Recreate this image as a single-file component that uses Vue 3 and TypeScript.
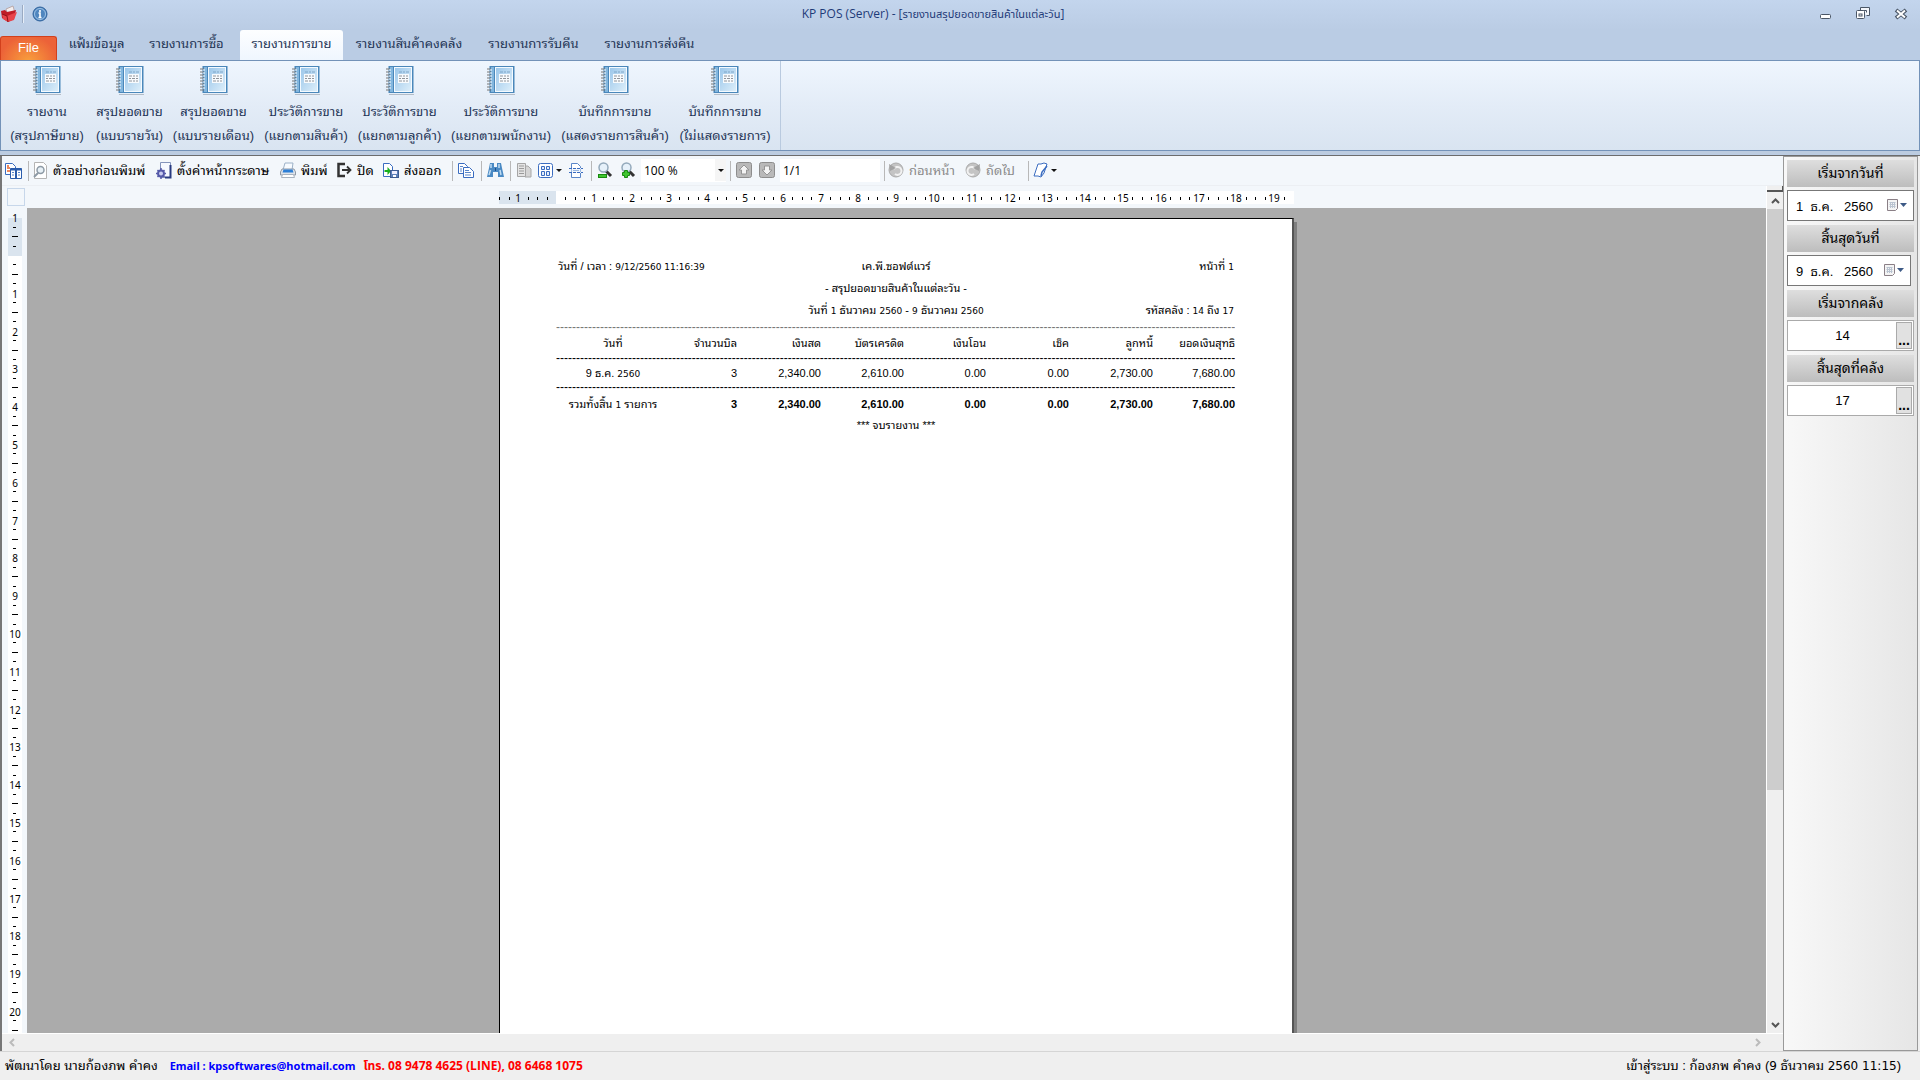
<script setup lang="ts">
import { ref } from 'vue'

interface RibbonItem { title: string; detail: string }
interface Tick { pos: number; label?: string; half?: boolean }

const CM = 37.8

const tabs = ['แฟ้มข้อมูล', 'รายงานการซื้อ', 'รายงานการขาย', 'รายงานสินค้าคงคลัง', 'รายงานการรับคืน', 'รายงานการส่งคืน']
const activeTab = ref(2)

const ribbon: RibbonItem[] = [
  { title: 'รายงาน', detail: '(สรุปภาษีขาย)' },
  { title: 'สรุปยอดขาย', detail: '(แบบรายวัน)' },
  { title: 'สรุปยอดขาย', detail: '(แบบรายเดือน)' },
  { title: 'ประวัติการขาย', detail: '(แยกตามสินค้า)' },
  { title: 'ประวัติการขาย', detail: '(แยกตามลูกค้า)' },
  { title: 'ประวัติการขาย', detail: '(แยกตามพนักงาน)' },
  { title: 'บันทึกการขาย', detail: '(แสดงรายการสินค้า)' },
  { title: 'บันทึกการขาย', detail: '(ไม่แสดงรายการ)' },
]

const columns = ['วันที่', 'จำนวนบิล', 'เงินสด', 'บัตรเครดิต', 'เงินโอน', 'เช็ค', 'ลูกหนี้', 'ยอดเงินสุทธิ']
const amounts = ['3', '2,340.00', '2,610.00', '0.00', '0.00', '2,730.00', '7,680.00']
const dashes = '-'.repeat(170)

function ticks(zero: number, from: number, to: number): Tick[] {
  const out: Tick[] = []
  for (let q = from; q <= to; q++) {
    if (q === 0) continue
    const pos = Math.round(zero + (q * CM) / 4)
    if (q % 4 === 0) out.push({ pos, label: String(Math.abs(q / 4)) })
    else out.push({ pos, half: q % 2 === 0 })
  }
  return out
}
const across = ticks(57, -6, 77)
const down = ticks(46, -4, 82)

const zoom = ref('100 %')
const page = ref('1/1')
const dateFrom = ref('1\u00a0\u00a0ธ.ค.\u00a0\u00a0\u00a02560')
const dateTo = ref('9\u00a0\u00a0ธ.ค.\u00a0\u00a0\u00a02560')
const storeFrom = ref('14')
const storeTo = ref('17')
</script>

<template>
  <div class="window">
    <header class="titlebar">
      <div class="quick">
        <svg width="18" height="18" viewBox="0 0 18 18"><path d="M6 4l7-3 2 7-7 3z" fill="#f4eeee" stroke="#b9a9a9" /><path d="M1 6l4-1 2 2 9-2-2 9-6 3-6-4z" fill="#c01d27" /><path d="M2 9l5 2 10-4-3 8-6 2-5-3z" fill="#e8444a" /><path d="M2 9l5 2 1 6" stroke="#8d1118" fill="none" /></svg>
        <span class="quick-sep"></span>
        <button class="bare" type="button" aria-label="Info">
          <svg width="16" height="16" viewBox="0 0 16 16"><circle cx="8" cy="8" r="7" fill="#4f86bf" stroke="#2f629c" /><circle cx="8" cy="8" r="5.500" fill="none" stroke="#9fc3e6" /><path d="M8 4v2M6.500 7h1.500v4M6.500 11.500h3" stroke="#fff" stroke-width="1.600" fill="none" /></svg>
        </button>
      </div>
      <h1>KP POS (Server) - [<span>รายงานสรุปยอดขายสินค้าในแต่ละวัน</span>]</h1>
      <div class="winbtns">
        <button class="bare" type="button" aria-label="Minimize"><svg width="14" height="14" viewBox="0 0 14 14"><rect x="2.500" y="7.500" width="10" height="4" rx="1" fill="#fff" stroke="#4a5666" /></svg></button>
        <button class="bare" type="button" aria-label="Restore"><svg width="14" height="14" viewBox="0 0 14 14"><path d="M4.500 3V.500h9v8h-3" fill="#f3f6fb" stroke="#4a5666" /><path d="M7 3.500h3.500v2" fill="none" stroke="#4a5666" /><rect x=".5" y="3.500" width="8" height="8" rx="1" fill="#fff" stroke="#4a5666" /><rect x="3" y="7" width="3" height="2" fill="none" stroke="#4a5666" /></svg></button>
        <button class="bare" type="button" aria-label="Close"><svg width="14" height="14" viewBox="0 0 14 14"><path d="M2 3l10 8M12 3L2 11" stroke="#4a5666" stroke-width="4" /><path d="M3 3.500l8 7M11 3.500l-8 7" stroke="#fff" stroke-width="2" /></svg></button>
      </div>
    </header>

    <nav class="tabs">
      <button class="file" type="button">File</button>
      <button v-for="(t, i) in tabs" :key="t" type="button" class="tab" :class="{ active: i === activeTab }" @click="activeTab = i">{{ t }}</button>
    </nav>

    <section class="ribbon">
      <div class="ribbon-group">
        <button v-for="item in ribbon" :key="item.detail" class="big" type="button">
          <svg width="30" height="30" viewBox="0 0 30 30">
            <path d="M4 29.500h25" stroke="#b4bdc8" />
            <rect x="3.500" y="1" width="25" height="27" fill="#4a87ba" />
            <rect x="5" y="2" width="3" height="25" fill="#82b6de" />
            <rect x="9" y="2" width="18" height="25" fill="#f4faff" />
            <rect x="10" y="3" width="16" height="23" fill="url(#cover)" />
            <rect x="13" y="9" width="11" height="9" fill="#f7fafd" />
            <path d="M14 7h3M18 7h2M21 7h3" stroke="#7ea6c8" />
            <path d="M14 11h3M18 11h2M21 11h2M14 13.500h2M17 13.500h3M21 13.500h2M14 16h3M18 16h2M21 16h2" stroke="#8f949a" />
            <path d="M1 4h4M1 7h4M1 10h4M1 13h4M1 16h4M1 19h4M1 22h4M1 25h4" stroke="#777" stroke-width="1" />
            <path d="M4 5h2M4 8h2M4 11h2M4 14h2M4 17h2M4 20h2M4 23h2" stroke="#fff" stroke-width="1" />
            <defs><linearGradient id="cover" x1="0" y1="0" x2="1" y2="1"><stop offset="0" stop-color="#9cc7ea" /><stop offset="1" stop-color="#dceefa" /></linearGradient></defs>
          </svg>
          <span>{{ item.title }}</span>
          <span>{{ item.detail }}</span>
        </button>
      </div>
    </section>

    <div class="body">
      <main class="viewer">
        <div class="toolbar" role="toolbar">
          <button type="button" aria-label="Contents"><svg width="17" height="17" viewBox="0 0 17 17"><path d="M.5 1.500h7l3 3v8H.5z" fill="#fff" stroke="#3a6cc0" /><path d="M2 4h2M2 6h3M2 9h3" stroke="#e8622a" stroke-width="1.500" /><path d="M5.500 6.500h11v10h-11z" fill="#fff" stroke="#2b5cab" /><path d="M5.500 7.500h11M11 7v9" stroke="#2b5cab" stroke-width="2" /><path d="M7 10.500h2M7 13h2M13 10.500h2M13 13h2" stroke="#5a86c8" /></svg></button>
          <i class="sep"></i>
          <button type="button"><svg width="15" height="17" viewBox="0 0 15 17"><path d="M1.500.500h9l3 3v13h-12z" fill="#fff" stroke="#b4b4b4" /><circle cx="7.500" cy="8" r="3.500" fill="#e7f0f6" stroke="#8d9aa5" stroke-width="1.500" /><path d="M5 11l-4 4" stroke="#8d9aa5" stroke-width="2" /></svg><span>ตัวอย่างก่อนพิมพ์</span></button>
          <button type="button"><svg width="16" height="17" viewBox="0 0 16 17"><path d="M4.500.500h10v15h-10z" fill="#f6f9ff" stroke="#8494bb" /><path d="M14.500 3v12.500H9" stroke="#283a80" stroke-width="2" fill="none" /><circle cx="5" cy="11.500" r="3" fill="#c9cdf0" stroke="#5459a8" stroke-width="2" /><path d="M5 6v2M5 15v2M0 11.500h1M9 11.500h1M1.500 8l1.500 1.500M8.500 8L7 9.500M1.500 15L3 13.500M8.500 15L7 13.500" stroke="#5459a8" stroke-width="1.500" /></svg><span>ตั้งค่าหน้ากระดาษ</span></button>
          <button type="button"><svg width="16" height="17" viewBox="0 0 16 17"><path d="M5 1h8l-1 7H3z" fill="#f7fbff" stroke="#9db2c8" /><path d="M2 7h12l1.500 3v3H.5v-3z" fill="#dfe4ea" stroke="#8f99a6" /><path d="M3.500 7.500h9l1 3h-11z" fill="#2c7fd6" /><path d="M2.500 12.500h11l1 3H1.500z" fill="#fff" stroke="#a9b3bf" /></svg><span>พิมพ์</span></button>
          <button type="button"><svg width="16" height="17" viewBox="0 0 16 17"><path d="M9 2H2.500v12H9" fill="none" stroke="#333" stroke-width="2.500" /><path d="M6 8h8M11 4.500L14.500 8 11 11.500" fill="none" stroke="#333" stroke-width="1.800" /></svg><span>ปิด</span></button>
          <button type="button"><svg width="16" height="17" viewBox="0 0 16 17"><path d="M.5 1.500h6l3 3v10h-9z" fill="#fff" stroke="#3a6cc0" /><path d="M1.500 8h3V5L8 9l-3.500 4v-3h-3z" fill="#18b01c" /><rect x="7.500" y="8.500" width="8" height="7" fill="#5c80b8" stroke="#3c5b90" /><rect x="9" y="9" width="5" height="3" fill="#eef" /><rect x="10" y="13" width="3" height="2" fill="#fff" /></svg><span>ส่งออก</span></button>
          <i class="sep"></i>
          <button type="button" aria-label="Copy"><svg width="16" height="17" viewBox="0 0 16 17"><path d="M.5 1.500h6l3 3v7h-9z" fill="#fff" stroke="#3a6cc0" /><path d="M5.500 5.500h6l4 4v6h-10z" fill="#fff" stroke="#3a6cc0" /><path d="M2 4.500h3M2 7h2M2 9h2M7 8.500h4M7 10.500h6M7 13h6" stroke="#5a86c8" /></svg></button>
          <i class="sep"></i>
          <button type="button" aria-label="Find"><svg width="17" height="17" viewBox="0 0 17 17"><path d="M3 1h4v4h3V1h4l1 5 2 9h-6v-5H6v5H0L2 6z" fill="#4a8ac4" /><path d="M4 2v4M3.500 8L2 13M12 2v4M13 8l1 5" stroke="#c0dcf2" stroke-width="1.500" /><path d="M8.500 6v3" stroke="#1e4c86" /></svg></button>
          <i class="sep"></i>
          <button type="button" aria-label="Outline" disabled><svg width="16" height="17" viewBox="0 0 16 17"><path d="M9 4h3l3 3v8H9z" fill="#d5d5d5" stroke="#a8a8a8" /><path d="M1.500 1.500h8v13h-8z" fill="#e4e4e4" stroke="#a5a5a5" /><path d="M3 4h5M3 6.500h5M3 9h5M3 11.500h5" stroke="#9a9a9a" /></svg></button>
          <button type="button" aria-label="Multiple pages"><svg width="26" height="17" viewBox="0 0 26 17"><rect x=".5" y="1.500" width="14" height="14" rx="2" fill="#fff" stroke="#3a6cc0" /><path d="M3.500 4.500h3v3h-3zM8.500 4.500h3v3h-3zM3.500 9.500h3v4h-3zM8.500 9.500h3v4h-3z" fill="#e4eefb" stroke="#3a6cc0" /><path d="M18 7h6l-3 3z" fill="#111" /></svg></button>
          <button type="button" aria-label="Continuous view"><svg width="16" height="17" viewBox="0 0 16 17"><path d="M3.500 6V1.500h6l3 3V6M3.500 11v4.500h9V11" fill="#fff" stroke="#5a86c8" /><path d="M1 6.500h14M1 10.500h14" stroke="#3a6cc0" stroke-dasharray="3 1" /><path d="M3.500 7v3M12.500 7v3M5 8.500h6" stroke="#9ab8e2" /></svg></button>
          <i class="sep"></i>
          <button type="button" aria-label="Zoom out"><svg width="17" height="17" viewBox="0 0 17 17"><path d="M9 9l5 5" stroke="#333" stroke-width="3" /><circle cx="6.500" cy="5.500" r="4.500" fill="#e6f1fa" stroke="#93a9bb" stroke-width="1.500" /><rect x="1.500" y="12.500" width="8" height="3" fill="#3fc62f" stroke="#188a10" /></svg></button>
          <button type="button" aria-label="Zoom in"><svg width="17" height="17" viewBox="0 0 17 17"><path d="M9 9l5 5" stroke="#333" stroke-width="3" /><circle cx="6.500" cy="5.500" r="4.500" fill="#e6f1fa" stroke="#93a9bb" stroke-width="1.500" /><path d="M4.500 8.500h3v2h2v3h-2v2h-3v-2h-2v-3h2z" fill="#3fc62f" stroke="#188a10" /></svg></button>
          <div class="zoombox">
            <select v-model="zoom" aria-label="Zoom"><option>100 %</option></select>
            <svg width="11" height="22" viewBox="0 0 11 22"><path d="M3 10h6l-3 3z" fill="#111" /></svg>
          </div>
          <i class="sep"></i>
          <button type="button" aria-label="Previous page" disabled><svg width="17" height="17" viewBox="0 0 17 17"><rect x=".5" y=".5" width="15" height="15" rx="2" fill="#b9b9b9" stroke="#8d8d8d" /><path d="M8 3l5 5h-2.500v4h-5V8H3z" fill="#f4f4f4" stroke="#959595" /></svg></button>
          <button type="button" aria-label="Next page" disabled><svg width="17" height="17" viewBox="0 0 17 17"><rect x=".5" y=".5" width="15" height="15" rx="2" fill="#b9b9b9" stroke="#8d8d8d" /><path d="M8 13L3 8h2.500V4h5v4H13z" fill="#f4f4f4" stroke="#959595" /></svg></button>
          <input v-model="page" class="pagebox" aria-label="Page" />
          <i class="sep"></i>
          <button type="button" disabled><svg width="16" height="17" viewBox="0 0 16 17"><circle cx="8" cy="8" r="7" fill="#c4c4c4" stroke="#aaa" /><path d="M6 7a4 4 0 1 1 1 5" fill="none" stroke="#f2f2f2" stroke-width="2" /><path d="M1 2l1 7 6-3z" fill="#a2a2a2" /></svg><span>ก่อนหน้า</span></button>
          <button type="button" disabled><svg width="16" height="17" viewBox="0 0 16 17"><circle cx="8" cy="8" r="7" fill="#c4c4c4" stroke="#aaa" /><path d="M10 7a4 4 0 1 0-1 5" fill="none" stroke="#f2f2f2" stroke-width="2" /><path d="M15 2l-1 7-6-3z" fill="#a2a2a2" /></svg><span>ถัดไป</span></button>
          <i class="sep"></i>
          <button type="button" aria-label="Watermark"><svg width="26" height="17" viewBox="0 0 26 17"><path d="M5 2h3l3-1 3 1-1 3-2 6-3 4-3-1H1z" fill="#fff" stroke="#3a6cc0" /><path d="M8 14l1-4 5-6" fill="none" stroke="#3a6cc0" stroke-width="1.500" /><path d="M18 7h6l-3 3z" fill="#111" /></svg></button>
        </div>

        <div class="work">
          <div class="vruler">
            <span class="corner"></span>
            <svg class="scale" width="16" height="824">
              <rect x="1" y="9" width="14" height="815" fill="#fff" />
              <rect x="1" y="9" width="14" height="38" fill="#dae4ee" />
              <template v-for="t in down" :key="t.pos">
                <text v-if="t.label" x="8" :y="t.pos + 5" class="num">{{ t.label }}</text>
                <rect v-else :x="t.half ? 5 : 6" :y="t.pos" :width="t.half ? 6 : 3" height="1" />
              </template>
            </svg>
          </div>
          <div class="center">
            <div class="hruler">
              <svg width="795" height="13">
                <rect width="795" height="13" fill="#fff" />
                <rect width="57" height="13" fill="#dae4ee" />
                <template v-for="t in across" :key="t.pos">
                  <text v-if="t.label" :x="t.pos" y="11" class="num">{{ t.label }}</text>
                  <rect v-else :x="t.pos" y="6" width="1" height="3" />
                </template>
              </svg>
            </div>
            <div class="canvas">
              <article class="sheet">
                <div class="meta">
                  <p>วันที่ / เวลา : <b>9/12/2560 11:16:39</b></p>
                  <p>เค.พี.ซอฟต์แวร์</p>
                  <p>หน้าที่ <b>1</b></p>
                  <p></p>
                  <p>- สรุปยอดขายสินค้าในแต่ละวัน -</p>
                  <p></p>
                  <p></p>
                  <p>วันที่ <b>1</b> ธันวาคม <b>2560</b> - <b>9</b> ธันวาคม <b>2560</b></p>
                  <p>รหัสคลัง : <b>14</b> ถึง <b>17</b></p>
                </div>
                <table>
                  <colgroup><col class="c1" /><col class="c2" /><col class="c3" /><col class="c4" /><col class="c5" /><col class="c4" /><col class="c3" /><col class="c5" /></colgroup>
                  <thead>
                    <tr class="rule light"><td colspan="8">{{ dashes }}</td></tr>
                    <tr class="names"><th v-for="c in columns" :key="c" scope="col">{{ c }}</th></tr>
                    <tr class="rule"><td colspan="8">{{ dashes }}</td></tr>
                  </thead>
                  <tbody>
                    <tr class="entry"><td>9 ธ.ค. <b>2560</b></td><td v-for="(a, i) in amounts" :key="i">{{ a }}</td></tr>
                    <tr class="rule"><td colspan="8">{{ dashes }}</td></tr>
                  </tbody>
                  <tfoot>
                    <tr class="total"><td>รวมทั้งสิ้น <b>1</b> รายการ</td><td v-for="(a, i) in amounts" :key="i">{{ a }}</td></tr>
                  </tfoot>
                </table>
                <p class="end">*** จบรายงาน ***</p>
              </article>
            </div>
          </div>
          <div class="vscroll">
            <span class="splitter"></span>
            <button class="bare" type="button" aria-label="Scroll up"><svg width="9" height="6" viewBox="0 0 9 6"><path d="M1 5l3.500-3.500L8 5" fill="none" stroke="#555" stroke-width="2" /></svg></button>
            <div class="track"><div class="thumb"></div></div>
            <button class="bare" type="button" aria-label="Scroll down"><svg width="9" height="6" viewBox="0 0 9 6"><path d="M1 1l3.500 3.500L8 1" fill="none" stroke="#555" stroke-width="2" /></svg></button>
          </div>
        </div>
        <div class="hscroll">
          <button class="bare" type="button" aria-label="Scroll left"><svg width="6" height="9" viewBox="0 0 6 9"><path d="M5 1L1.500 4.500 5 8" fill="none" stroke="#bbb" stroke-width="2" /></svg></button>
          <button class="bare" type="button" aria-label="Scroll right"><svg width="6" height="9" viewBox="0 0 6 9"><path d="M1 1l3.500 3.500L1 8" fill="none" stroke="#bbb" stroke-width="2" /></svg></button>
        </div>
      </main>

      <aside class="filters">
        <label for="date-from">เริ่มจากวันที่</label>
        <div class="field date">
          <input id="date-from" v-model="dateFrom" />
          <button class="bare" type="button" aria-label="Pick start date"><svg width="20" height="13" viewBox="0 0 20 13"><path d="M.5.500h10v9l-2 2h-8z" fill="#f4f4f4" stroke="#8a7f86" /><path d="M2.500 3.500h6M2.500 5.500h6M2.500 7.500h6M3.500 3v6M5.500 3v6M7.500 3v6" stroke="#b9c3d0" /><path d="M13 4h7l-3.500 4z" fill="#3d5a86" /></svg></button>
        </div>
        <label for="date-to">สิ้นสุดวันที่</label>
        <div class="field date narrow">
          <input id="date-to" v-model="dateTo" />
          <button class="bare" type="button" aria-label="Pick end date"><svg width="20" height="13" viewBox="0 0 20 13"><path d="M.5.500h10v9l-2 2h-8z" fill="#f4f4f4" stroke="#8a7f86" /><path d="M2.500 3.500h6M2.500 5.500h6M2.500 7.500h6M3.500 3v6M5.500 3v6M7.500 3v6" stroke="#b9c3d0" /><path d="M13 4h7l-3.500 4z" fill="#3d5a86" /></svg></button>
        </div>
        <label for="store-from">เริ่มจากคลัง</label>
        <div class="field store">
          <input id="store-from" v-model="storeFrom" />
          <button type="button" aria-label="Browse start store">...</button>
        </div>
        <label for="store-to">สิ้นสุดที่คลัง</label>
        <div class="field store">
          <input id="store-to" v-model="storeTo" />
          <button type="button" aria-label="Browse end store">...</button>
        </div>
      </aside>
    </div>

    <footer class="status">
      <span>พัฒนาโดย นายก้องภพ คำคง</span>
      <a href="mailto:kpsoftwares@hotmail.com">Email : kpsoftwares@hotmail.com</a>
      <strong>โทร. 08 9478 4625 (LINE), 08 6468 1075</strong>
      <span class="login">เข้าสู่ระบบ : ก้องภพ คำคง (<b>9</b> ธันวาคม <b>2560 11:15</b>)</span>
    </footer>
  </div>
</template>

<style>
body { background: #efefef; overflow: hidden; }
</style>

<style scoped>
* { box-sizing: border-box; }
.window { height: 100vh; display: flex; flex-direction: column; background: #bacce4; font: 13px/20px "Liberation Sans", "Noto Sans Thai Looped", "Noto Looped Thai", Loma, sans-serif; color: #000; white-space: nowrap; overflow: hidden; }
button, input, select { font: inherit; color: inherit; margin: 0; border-radius: 0; }
svg { display: block; flex: none; }
p, h1 { margin: 0; }
.bare { border: 0; padding: 0; background: none; display: flex; align-items: center; justify-content: center; }

.titlebar { height: 30px; flex: none; display: grid; grid-template-columns: 1fr auto 1fr; align-items: center; padding: 0 12px 2px 0; background: linear-gradient(#c3d5ed, #bacce4); }
.quick { display: flex; align-items: center; }
.quick-sep { width: 2px; height: 18px; margin: 0 8px 0 4px; background: #9aaac2; border-right: 1px solid #e6eef8; }
h1 { font: 12px/20px "Open Sans", "Noto Sans Thai", sans-serif; color: #1e3a78; padding-right: 42px; }
h1 span { font-size: 11px; }
.winbtns { display: flex; justify-content: flex-end; gap: 24px; }

.tabs { height: 30px; flex: none; display: grid; grid-template-columns: 57px 79px 101px 106px 132px 117px 115px; align-items: end; }
.tab { height: 30px; border: 0; padding: 0 0 2px; background: none; color: #1f3556; }
.tab.active { margin-left: 3px; background: linear-gradient(#fdfeff, #eff6fe); border-radius: 3px 3px 0 0; }
.file { height: 24px; padding: 0 0 2px; border: 1px solid #d2401c; border-bottom: 0; border-radius: 3px 3px 0 0; color: #fff; background: radial-gradient(ellipse at 50% 110%, #f9a13c, #ec6238 75%); }

.ribbon { height: 91px; flex: none; border: 1px solid #7392b8; background: linear-gradient(#eff6fe, #e3ecf7 50%, #d9e4f1); display: flex; box-shadow: 0 3px #bccce0; }
.ribbon-group { display: grid; grid-template-columns: 88px 77px 91px 94px 93px 110px 118px 102px; padding: 0 4px 0 2px; border-right: 1px solid #b9cadf; }
.big { border: 0; background: none; padding: 4px 0 0; display: flex; flex-direction: column; align-items: center; color: #1f3556; line-height: 24px; }
.big svg { margin-bottom: 5px; }

.body { flex: 1; min-height: 0; display: flex; margin-top: 4px; border-top: 1px solid #6c6c6c; background: #efefef; padding-right: 2px; }
.viewer { flex: 1; min-width: 0; display: flex; flex-direction: column; border-left: 2px solid #777; }
.toolbar { height: 30px; flex: none; background: #f3f7fb; border-bottom: 1px solid #eceff3; padding-left: 3px; display: grid; align-items: center; grid-template-columns: 23px 5px 123px 124px 56px 47px 69px 6px 23px 6px 23px 6px 22px 30px 23px 6px 23px 21px 89px 6px 23px 21px 104px 4px 77px 63px 5px 30px; }
.toolbar button { border: 0; padding: 0; background: none; display: flex; align-items: center; gap: 5px; height: 24px; }
.toolbar button:disabled { color: #8a8a8a; }
.sep { width: 1px; height: 20px; background: #b8b8b8; }
.zoombox { width: 85px; height: 23px; background: #fff; display: flex; }
.zoombox svg { background: #f5f5f5; }
.zoombox select { flex: 1; min-width: 0; border: 0; background: none; appearance: none; padding: 0 3px; font: 12px/20px "Open Sans", sans-serif; }
.pagebox { width: 100px; height: 23px; border: 0; background: #fff; padding: 0 3px; font: 12px/20px "Open Sans", sans-serif; }

.work { flex: 1; min-height: 0; display: flex; }
.vruler { width: 25px; flex: none; background: #f3f7fb; display: flex; flex-direction: column; align-items: center; overflow: hidden; padding-top: 2px; }
.corner { width: 18px; height: 18px; flex: none; border: 1px solid #c7d7ea; margin: 0 0 3px 2px; }
.scale { flex: 1; min-height: 0; }
.num { font: 10px "Noto Sans", sans-serif; text-anchor: middle; }
.center { flex: 1; min-width: 0; display: flex; flex-direction: column; }
.hruler { height: 22px; flex: none; background: #f3f7fb; display: flex; justify-content: center; align-items: center; }
.canvas { flex: 1; min-height: 0; background: #ababab; overflow: hidden; display: flex; justify-content: center; padding-top: 10px; }
.sheet { width: 795px; height: 1123px; flex: none; background: #fff; border: 1px solid #000; border-right: 2px solid #555; box-shadow: 3px 4px #7f7f7f; padding: 36px 56px; font-size: 11px; line-height: 22px; }
.meta { display: grid; grid-template-columns: 1fr auto 1fr; padding: 0 2px; }
.meta p { text-align: center; height: 22px; }
.meta p:nth-child(3n + 1) { text-align: left; }
.meta p:nth-child(3n) { text-align: right; }
b { font: 9px/1 "DejaVu Sans", sans-serif; }
table { width: 679px; table-layout: fixed; border-collapse: collapse; }
.c1 { width: 114px; } .c2 { width: 67px; } .c3 { width: 84px; } .c4 { width: 83px; } .c5 { width: 82px; }
td, th { padding: 0; text-align: right; font-weight: normal; line-height: 14px; }
td:first-child, th:first-child { text-align: center; }
.rule td { font-size: 12px; line-height: 12px; height: 12px; text-align: left; overflow: hidden; }
.rule.light td { color: #777; }
.names th { height: 19px; }
.entry td { height: 17px; }
.total td { height: 21px; }
.entry td, .total td { font-size: 11px; }
.total td + td { font-weight: bold; }
.end { text-align: center; }

.vscroll { width: 17px; flex: none; background: #efefef; display: flex; flex-direction: column; border-left: 1px solid #fff; }
.splitter { height: 6px; flex: none; border-bottom: 2px solid #555; border-right: 1px solid #555; background: #efefef; }
.vscroll .bare { height: 17px; flex: none; }
.track { flex: 1; }
.thumb { height: 72%; background: #cdcdcd; }
.hscroll { height: 18px; flex: none; background: #efefef; display: flex; justify-content: space-between; border-top: 1px solid #fff; padding: 0 22px 0 7px; }

.filters { width: 135px; flex: none; border: 1px solid #999; padding: 3px; background: linear-gradient(90deg, #f8f8f8, #e6e6e6); font-size: 14px; }
.filters label { display: block; height: 27px; line-height: 26px; text-align: center; background: linear-gradient(#dedede, #bdbdbd); }
.field { height: 31px; margin: 3px 0 4px; background: #fff; border: 1px solid #777; display: flex; align-items: center; }
.narrow { margin-right: 3px; }
.field input { flex: 1; min-width: 0; width: 20px; height: 26px; border: 0; padding: 0; background: none; font-size: 13px; }
.date { padding: 0 6px 0 8px; }
.store { border-color: #aaa; padding: 1px; }
.store input { text-align: center; }
.store button { width: 16px; height: 27px; padding: 0; border: 1px solid #aaa; background: #e1e1e1; display: flex; align-items: flex-end; justify-content: center; font-weight: bold; line-height: 16px; }

.status { height: 29px; flex: none; background: #efefef; border-top: 1px solid #d5d5d5; display: flex; align-items: center; padding: 0 19px 0 5px; font-size: 13px; }
.status a, .status strong { margin-left: 8px; font: bold 12px/20px "Open Sans", "Noto Sans Thai", sans-serif; color: #00f; text-decoration: none; }
.status a { margin-left: 12px; font: bold 11px/20px "Noto Sans", sans-serif; }
.status strong { color: #f00; }
.status b { font-size: 12px; }
.login { margin-left: auto; }
</style>
